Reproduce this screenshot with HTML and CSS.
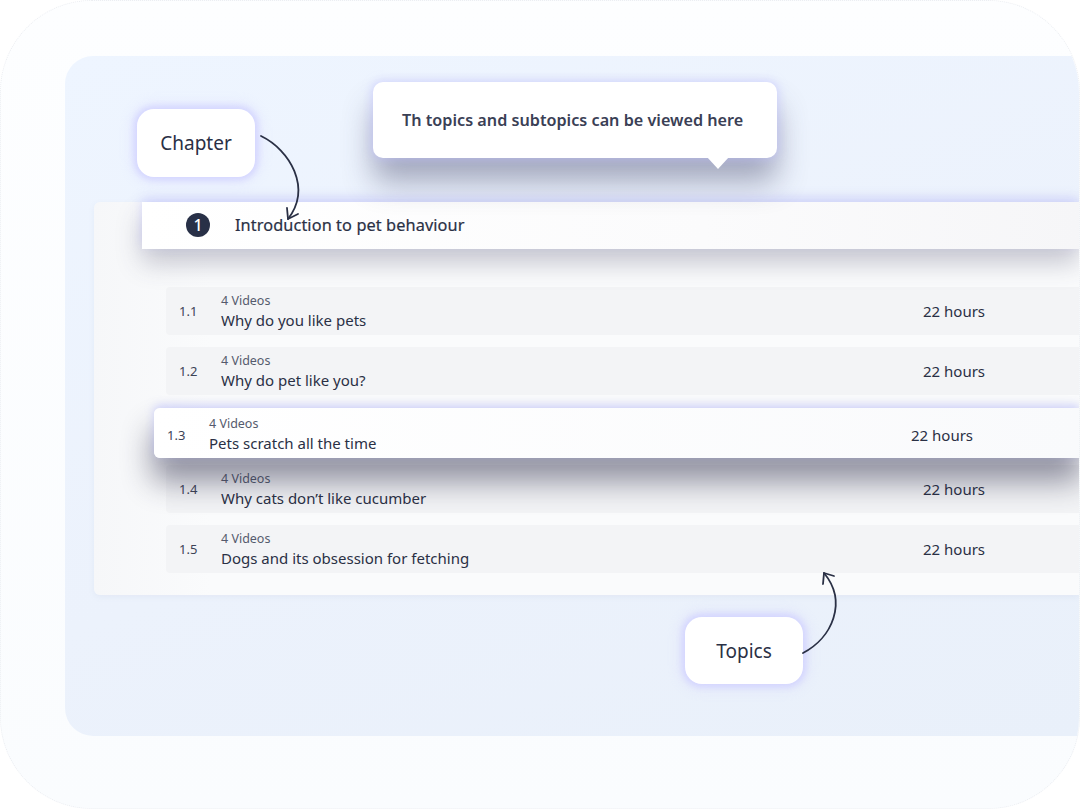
FILE: index.html
```html
<!DOCTYPE html>
<html lang="en">
<head>
<meta charset="utf-8">
<title>Course outline</title>
<link rel="stylesheet" href="styles.css">
</head>
<body>
<div class="frame">
  <div class="canvas">
    <div class="table">
      <div class="chapter-row">
        <span class="badge">1</span>
        <span class="chapter-title">Introduction to pet behaviour</span>
      </div>
      <div class="topics">
        <div class="topic">
          <span class="num">1.1</span>
          <div class="info"><span class="count">4 Videos</span><span class="name">Why do you like pets</span></div>
          <span class="hours">22 hours</span>
        </div>
        <div class="topic">
          <span class="num">1.2</span>
          <div class="info"><span class="count">4 Videos</span><span class="name">Why do pet like you?</span></div>
          <span class="hours">22 hours</span>
        </div>
        <div class="topic raised">
          <span class="num">1.3</span>
          <div class="info"><span class="count">4 Videos</span><span class="name">Pets scratch all the time</span></div>
          <span class="hours">22 hours</span>
        </div>
        <div class="topic">
          <span class="num">1.4</span>
          <div class="info"><span class="count">4 Videos</span><span class="name">Why cats don’t like cucumber</span></div>
          <span class="hours">22 hours</span>
        </div>
        <div class="topic">
          <span class="num">1.5</span>
          <div class="info"><span class="count">4 Videos</span><span class="name">Dogs and its obsession for fetching</span></div>
          <span class="hours">22 hours</span>
        </div>
      </div>
    </div>

    <div class="bubble bubble-chapter">Chapter</div>
    <div class="tooltip">Th topics and subtopics can be viewed here</div>
    <div class="bubble bubble-topics">Topics</div>

    <svg class="arrows" width="1080" height="809" viewBox="0 0 1080 809" fill="none" stroke="#2a3045" stroke-width="1.8" stroke-linecap="round" stroke-linejoin="round">
      <path d="M261 136 C 290 150, 312 188, 288 219"/>
      <path d="M287 208 L288 219 L298 214"/>
      <path d="M803 653 C 832 638, 848 602, 824 573"/>
      <path d="M823 584 L824 573 L834 576"/>
    </svg>
  </div>
</div>
</body>
</html>
```

FILE: styles.css
```css
html, body {
  margin: 0;
  padding: 0;
  background: #ffffff;
}

body {
  width: 1080px;
  height: 809px;
  overflow: hidden;
  font-family: "Noto Sans", "Open Sans", sans-serif;
  color: #2a3045;
}

.frame {
  box-sizing: border-box;
  width: 1080px;
  height: 809px;
  border: 1px dotted #eceef2;
  border-radius: 92px;
  background: linear-gradient(180deg, #fdfeff 0%, #fafcfe 100%);
  padding: 55px 0 0 64px;
  overflow: hidden;
}

.canvas {
  position: relative;
  height: 680px;
  border-radius: 28px 0 0 28px;
  background: linear-gradient(160deg, #eef5ff 0%, #ecf2fc 55%, #e9f0fa 100%);
  padding: 146px 0 0 29px;
  box-sizing: border-box;
}

.table {
  height: 393px;
  border-radius: 6px 0 0 6px;
  background: linear-gradient(90deg, #f6f7f9 0%, #fafbfc 12%, #fafbfc 100%);
  box-shadow: 0 2px 6px rgba(120, 130, 160, 0.08);
  box-sizing: border-box;
  padding-bottom: 21px;
}

.chapter-row {
  position: relative;
  z-index: 2;
  display: flex;
  align-items: center;
  height: 47px;
  box-sizing: border-box;
  padding-bottom: 2px;
  margin-left: 48px;
  padding-left: 44px;
  background: linear-gradient(90deg, #ffffff 0%, #fbfbfc 60%, #f6f6f8 100%);
  box-shadow: 0 -4px 10px rgba(185, 185, 255, 0.45), 0 14px 26px rgba(60, 62, 95, 0.28);
}

.badge {
  width: 24px;
  height: 24px;
  border-radius: 50%;
  background: #283047;
  color: #ffffff;
  font-size: 16px;
  font-weight: 500;
  line-height: 24px;
  text-align: center;
  margin-right: 25px;
}

.chapter-title {
  font-size: 16.3px;
  font-weight: 400;
  letter-spacing: 0.1px;
  -webkit-text-stroke: 0.2px #2a3045;
}

.topics {
  display: flex;
  flex-direction: column;
  gap: 12px;
  margin-top: 38px;
  margin-left: 72px;
}

.topic {
  display: flex;
  align-items: center;
  height: 48px;
  box-sizing: border-box;
  padding-left: 13px;
  border-radius: 4px 0 0 4px;
  background: #f3f4f6;
}

.num {
  width: 42px;
  font-size: 13px;
  color: #3d4356;
}

.info {
  width: 702px;
  display: flex;
  flex-direction: column;
}

.count {
  font-size: 12.5px;
  line-height: 17px;
  color: #555b6d;
}

.name {
  font-size: 15px;
  line-height: 22px;
  color: #2a3045;
}

.hours {
  font-size: 15px;
  color: #2a3045;
}

.topic.raised {
  position: relative;
  z-index: 1;
  height: 50px;
  margin: 1px 0 -5px -12px;
  padding-top: 3px;
  background: linear-gradient(90deg, #ffffff 0%, #f9fafc 100%);
  border-radius: 6px 0 0 6px;
  box-shadow: 0 -3px 8px rgba(175, 180, 255, 0.5), 0 22px 30px 2px rgba(40, 40, 70, 0.48);
}

.bubble {
  position: absolute;
  width: 118px;
  height: 68px;
  border-radius: 17px;
  background: #ffffff;
  display: flex;
  align-items: center;
  justify-content: center;
  font-size: 19px;
  color: #2a3045;
  box-shadow: 0 0 6px 3px rgba(205, 205, 255, 0.75), 0 0 14px 4px rgba(215, 215, 255, 0.45);
  z-index: 3;
}

.bubble-chapter {
  left: 72px;
  top: 53px;
}

.bubble-topics {
  left: 620px;
  top: 561px;
  height: 67px;
}

.tooltip {
  position: absolute;
  left: 308px;
  top: 26px;
  width: 404px;
  height: 76px;
  box-sizing: border-box;
  padding-left: 29px;
  border-radius: 10px;
  background: #ffffff;
  display: flex;
  align-items: center;
  font-size: 16.2px;
  font-weight: 600;
  color: #3a4055;
  box-shadow: 0 0 8px 2px rgba(195, 195, 255, 0.55), 0 24px 30px rgba(60, 62, 100, 0.42);
  z-index: 3;
}

.tooltip::after {
  content: "";
  position: absolute;
  left: 334px;
  bottom: -11px;
  width: 0;
  height: 0;
  border-left: 11px solid transparent;
  border-right: 11px solid transparent;
  border-top: 12px solid #ffffff;
}

.arrows {
  position: absolute;
  left: -65px;
  top: -56px;
  z-index: 4;
  pointer-events: none;
}
```
